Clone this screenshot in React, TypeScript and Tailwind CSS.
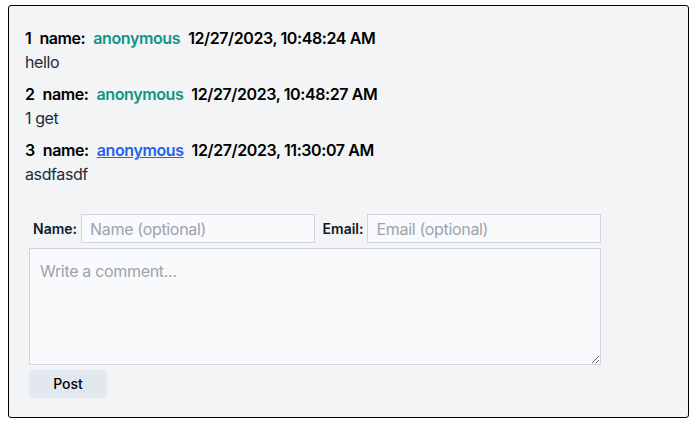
import { useState } from 'react';

interface Comment {
  id: number;
  name: string;
  time: string;
  text: string;
  link?: boolean;
}

const comments: Comment[] = [
  { id: 1, name: 'anonymous', time: '12/27/2023, 10:48:24 AM', text: 'hello' },
  { id: 2, name: 'anonymous', time: '12/27/2023, 10:48:27 AM', text: '1 get' },
  { id: 3, name: 'anonymous', time: '12/27/2023, 11:30:07 AM', text: 'asdfasdf', link: true },
];

const App = () => {
  const [name, setName] = useState('');
  const [email, setEmail] = useState('');
  const [body, setBody] = useState('');

  return (
    <div className="bg-white px-2 pt-[5px] pb-4 font-['Inter',sans-serif]">
      <div className="border border-black rounded-[3px] bg-[#f3f4f6] px-4 pt-5 pb-[19px]">
        {/* Comment list */}
        <div className="flex flex-col gap-2 tracking-[-0.025em]">
          {comments.map((c) => (
            <div key={c.id}>
              <div className="flex items-center gap-2 text-base leading-6 font-semibold text-black">
                <span>{c.id}</span>
                <span>name:</span>
                {c.link ? (
                  <a href="#" className="text-[#2563eb] underline">{c.name}</a>
                ) : (
                  <span className="text-[#0f9684]">{c.name}</span>
                )}
                <span>{c.time}</span>
              </div>
              <div className="text-base leading-6 text-[#1f2937]">{c.text}</div>
            </div>
          ))}
        </div>

        {/* Form */}
        <div className="mt-7 px-1 w-[580px]">
          <div className="flex items-center h-[29px]">
            <label className="pl-1 pr-1 text-sm font-semibold text-[#111827]">Name:</label>
            <input
              value={name}
              onChange={(e) => setName(e.target.value)}
              placeholder="Name (optional)"
              className="flex-1 min-w-0 h-[29px] px-2 text-base tracking-[-0.02em] bg-[#f9fafb] border border-[#d1d5db] placeholder:text-[#9ca3af] outline-none"
            />
            <label className="pl-2 pr-1 text-sm font-semibold text-[#111827]">Email:</label>
            <input
              value={email}
              onChange={(e) => setEmail(e.target.value)}
              placeholder="Email (optional)"
              className="flex-1 min-w-0 h-[29px] px-2 text-base tracking-[-0.02em] bg-[#f9fafb] border border-[#d1d5db] placeholder:text-[#9ca3af] outline-none"
            />
          </div>
          <textarea
            value={body}
            onChange={(e) => setBody(e.target.value)}
            placeholder="Write a comment..."
            className="mt-[5px] block w-full h-[117px] p-2.5 text-base leading-6 tracking-[-0.02em] bg-[#f9fafb] border border-[#d1d5db] placeholder:text-[#9ca3af] outline-none"
          />
          <button className="mt-[5px] block w-[78px] h-[28px] rounded-md bg-[#e2e8f0] text-sm font-medium text-black">
            Post
          </button>
        </div>
      </div>
    </div>
  );
};

export default App;
